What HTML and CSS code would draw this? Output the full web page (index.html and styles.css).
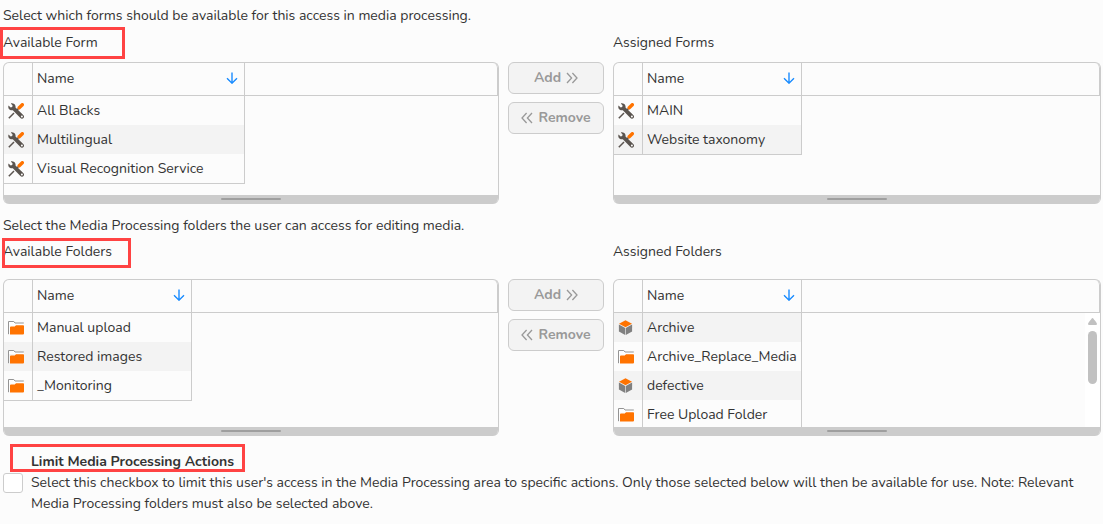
FILE: index.html
```html
<!DOCTYPE html>
<html lang="en">
<head>
    <meta charset="UTF-8">
    <title>Media Processing Access</title>
    <link rel="stylesheet" href="styles.css">
</head>
<body>
    <svg class="sprite" aria-hidden="true">
        <symbol id="icon-tools" viewBox="0 0 16 16">
            <path d="M0.8 15.2 L6 10" stroke="#5b5550" stroke-width="1.5" fill="none"/>
            <path d="M9 7 L10.4 5.6" stroke="#5b5550" stroke-width="1.5" fill="none"/>
            <path d="M11.2 4.8 L14.3 1.7" stroke="#ff7300" stroke-width="3.4" stroke-linecap="round" fill="none"/>
            <path d="M2.8 0.4 L4.6 2.4 L4.2 4 L2.7 4.4 L0.5 2.6 C-0.2 4.8 0.9 6.7 2.8 7.2 C3.6 7.4 4.2 7.4 4.8 7.3 L12.2 14.8 C13.1 15.9 14.7 16 15.5 15 C16.4 14 16.1 12.6 15 11.8 L7.5 4.6 C7.8 3.3 7.3 1.9 6.2 1 C5.2 0.3 3.9 0 2.8 0.4 Z" fill="#5b5550"/>
            <circle cx="13.9" cy="13.6" r="1" fill="#fcfcfc"/>
        </symbol>
        <symbol id="icon-folder" viewBox="0 0 16 16">
            <path d="M0.5 14 V1.5 H6 L7.2 3.3 H16 V5 H1 V14 Z" fill="#fff"/>
            <path d="M0.5 14.2 V1.5 H5.8 L7 3 H15.8" stroke="#949494" stroke-width="1" fill="none"/>
            <path d="M3 6.4 H6.8 L8 5.2 H15.2 Q16 5.2 16 6 V13.4 Q16 14.4 15 14.4 H2 V7.4 Q2 6.4 3 6.4 Z" fill="#ff7300"/>
        </symbol>
        <symbol id="icon-cube" viewBox="0 0 16 16">
            <path d="M7.5 0.2 L14 3.7 L7.5 7.2 L1 3.7 Z" fill="#ff7300"/>
            <path d="M0.9 4.5 L7.2 7.9 V15 L0.9 11.6 Z" fill="#808080"/>
            <path d="M14.1 4.5 L7.8 7.9 V15 L14.1 11.6 Z" fill="#808080"/>
        </symbol>
        <symbol id="icon-sort" viewBox="0 0 12 12">
            <path d="M6 0.5 V11 M1 6.2 L6 11.2 L11 6.2" stroke="#1a8cff" stroke-width="1.4" fill="none"/>
        </symbol>
        <symbol id="icon-right" viewBox="0 0 12 12">
            <path d="M1 1 L5.6 6 L1 11 M6.4 1 L11 6 L6.4 11" stroke="#999" stroke-width="1.3" fill="none"/>
        </symbol>
        <symbol id="icon-left" viewBox="0 0 12 12">
            <path d="M5.6 1 L1 6 L5.6 11 M11 1 L6.4 6 L11 11" stroke="#999" stroke-width="1.3" fill="none"/>
        </symbol>
    </svg>

    <main class="access-settings">
        <section class="picker">
            <p class="intro">Select which forms should be available for this access in media processing.</p>
            <div class="picker-labels">
                <h3 class="label"><span class="marked marked-form">Available Form</span></h3>
                <h3 class="label label-assigned">Assigned Forms</h3>
            </div>
            <div class="picker-lists">
                <div class="list">
                    <div class="list-view">
                        <table>
                            <thead>
                                <tr><th class="col-icon"></th><th class="col-name col-wide"><span class="sort">Name <svg><use href="#icon-sort"/></svg></span></th><th class="col-rest"></th></tr>
                            </thead>
                            <tbody>
                                <tr><td><svg><use href="#icon-tools"/></svg></td><td>All Blacks</td></tr>
                                <tr><td><svg><use href="#icon-tools"/></svg></td><td>Multilingual</td></tr>
                                <tr><td><svg><use href="#icon-tools"/></svg></td><td>Visual Recognition Service</td></tr>
                            </tbody>
                        </table>
                    </div>
                    <div class="resizer"></div>
                </div>
                <div class="actions">
                    <button type="button" disabled>Add <svg><use href="#icon-right"/></svg></button>
                    <button type="button" disabled><svg><use href="#icon-left"/></svg> Remove</button>
                </div>
                <div class="list">
                    <div class="list-view">
                        <table>
                            <thead>
                                <tr><th class="col-icon"></th><th class="col-name"><span class="sort">Name <svg><use href="#icon-sort"/></svg></span></th><th class="col-rest"></th></tr>
                            </thead>
                            <tbody>
                                <tr><td><svg><use href="#icon-tools"/></svg></td><td>MAIN</td></tr>
                                <tr><td><svg><use href="#icon-tools"/></svg></td><td>Website taxonomy</td></tr>
                            </tbody>
                        </table>
                    </div>
                    <div class="resizer"></div>
                </div>
            </div>
        </section>

        <section class="picker picker-folders">
            <p class="intro">Select the Media Processing folders the user can access for editing media.</p>
            <div class="picker-labels">
                <h3 class="label"><span class="marked marked-folders">Available Folders</span></h3>
                <h3 class="label label-assigned">Assigned Folders</h3>
            </div>
            <div class="picker-lists">
                <div class="list">
                    <div class="list-view">
                        <table>
                            <thead>
                                <tr><th class="col-icon"></th><th class="col-name"><span class="sort">Name <svg><use href="#icon-sort"/></svg></span></th><th class="col-rest"></th></tr>
                            </thead>
                            <tbody>
                                <tr><td><svg><use href="#icon-folder"/></svg></td><td>Manual upload</td></tr>
                                <tr><td><svg><use href="#icon-folder"/></svg></td><td>Restored images</td></tr>
                                <tr><td><svg><use href="#icon-folder"/></svg></td><td>_Monitoring</td></tr>
                            </tbody>
                        </table>
                    </div>
                    <div class="resizer"></div>
                </div>
                <div class="actions">
                    <button type="button" disabled>Add <svg><use href="#icon-right"/></svg></button>
                    <button type="button" disabled><svg><use href="#icon-left"/></svg> Remove</button>
                </div>
                <div class="list">
                    <div class="list-view">
                        <table class="stripe-odd">
                            <thead>
                                <tr><th class="col-icon"></th><th class="col-name"><span class="sort">Name <svg><use href="#icon-sort"/></svg></span></th><th class="col-rest"></th></tr>
                            </thead>
                            <tbody>
                                <tr><td><svg><use href="#icon-cube"/></svg></td><td>Archive</td></tr>
                                <tr><td><svg><use href="#icon-folder"/></svg></td><td>Archive_Replace_Media</td></tr>
                                <tr><td><svg><use href="#icon-cube"/></svg></td><td>defective</td></tr>
                                <tr><td><svg><use href="#icon-folder"/></svg></td><td>Free Upload Folder</td></tr>
                            </tbody>
                        </table>
                        <div class="scrollbar">
                            <svg viewBox="0 0 9 7"><path d="M4.5 0 Q5.2 0 9 5.5 Q9 7 8 7 H1 Q0 7 0 5.5 Q3.8 0 4.5 0 Z" fill="#c1c1c1"/></svg>
                            <div class="scrollbar-thumb"></div>
                        </div>
                    </div>
                    <div class="resizer"></div>
                </div>
            </div>
        </section>

        <section class="limit">
            <input type="checkbox" id="limit-actions">
            <label for="limit-actions">
                <strong class="marked marked-limit">Limit Media Processing Actions</strong>
                <span class="limit-text">Select this checkbox to limit this user's access in the Media Processing area to specific actions. Only those selected below will then be available for use. Note: Relevant Media Processing folders must also be selected above.</span>
            </label>
        </section>
    </main>
</body>
</html>
```
FILE: styles.css
```css
* {
    margin: 0;
    padding: 0;
    box-sizing: border-box;
}

body {
    font-family: Nunito, Lato, sans-serif;
    font-size: 14px;
    line-height: 21px;
    color: #333;
    background-color: #fcfcfc;
}

.sprite {
    display: none;
}

.access-settings {
    padding: 5px 2px 5px 3px;
}

.picker-labels,
.picker-lists {
    display: grid;
    grid-template-columns: 496fr 96px 488fr;
    column-gap: 9px;
}

.picker-labels {
    margin: 6px 0 9px;
}

.picker-folders {
    margin-top: 11px;
}

.picker-folders .picker-labels {
    margin: 5px 0 17px;
}

.label {
    font-size: 14px;
    font-weight: 400;
}

.label-assigned {
    grid-column: 3;
}

/* red frames round the labels */
.marked {
    position: relative;
}

.marked::after {
    content: "";
    position: absolute;
    border: 3px solid #ff4343;
}

.marked-form::after {
    inset: -6px -27px -7px -3px;
}

.marked-folders::after {
    inset: -4px -19px -7px -1px;
}

.marked-limit::after {
    inset: -7px -11px 0 -21px;
}

.list {
    border: 1px solid #ccc;
    border-bottom: 0;
    border-radius: 6px;
    overflow: hidden;
}

.list-view {
    position: relative;
    height: 132px;
    overflow: hidden;
}

.picker-folders .list-view {
    height: 147px;
}

table {
    width: 100%;
    table-layout: fixed;
    border-collapse: separate;
    border-spacing: 0;
}

th {
    height: 33px;
    font-weight: 400;
    text-align: left;
    border-right: 1px solid #ccc;
    border-bottom: 1px solid #ccc;
}

.col-icon {
    width: 29px;
}

.col-name {
    width: 159px;
    padding: 0 4px 2px;
}

.col-wide {
    width: 212px;
}

.col-rest {
    border-top-right-radius: 5px;
}

td {
    height: 29px;
    padding: 0 4px;
    border-right: 1px solid #ccc;
    white-space: nowrap;
}

tbody tr:nth-child(even) td,
.stripe-odd tbody tr:nth-child(odd) td {
    background-color: #f3f3f3;
}

.stripe-odd tbody tr:nth-child(even) td {
    background-color: transparent;
}

tbody tr:last-child td {
    height: 30px;
    border-bottom: 1px solid #ccc;
}

td svg {
    display: block;
    width: 16px;
    height: 16px;
}

.sort {
    display: flex;
    justify-content: space-between;
    align-items: center;
    padding-right: 2px;
}

.sort svg {
    width: 12px;
    height: 12px;
}

.resizer {
    height: 9px;
    padding-top: 3px;
    background-color: #ccc;
}

.resizer::before {
    content: "";
    display: block;
    width: 60px;
    height: 2px;
    margin: 0 auto;
    border-radius: 1px;
    background-color: #9f9f9f;
}

.scrollbar {
    position: absolute;
    top: 33px;
    right: 0;
    bottom: 0;
    width: 15px;
    padding: 5px 3px;
    background-color: #fff;
}

.scrollbar svg {
    display: block;
    width: 9px;
    height: 7px;
}

.scrollbar-thumb {
    height: 53px;
    margin-top: 6px;
    border-radius: 5px;
    background-color: #c1c1c1;
}

.actions {
    display: flex;
    flex-direction: column;
    gap: 8px;
}

button {
    display: flex;
    justify-content: center;
    align-items: center;
    gap: 5px;
    height: 32px;
    padding-bottom: 1px;
    font-family: inherit;
    font-size: 14px;
    font-weight: 700;
    color: #999;
    background-color: #f3f3f3;
    border: 1px solid #ccc;
    border-radius: 6px;
}

button svg {
    width: 12px;
    height: 12px;
}

.limit {
    display: flex;
    align-items: flex-start;
    gap: 8px;
    margin-top: 15px;
}

.limit input {
    appearance: none;
    flex-shrink: 0;
    width: 20px;
    height: 20px;
    margin-top: 22px;
    background-color: #fff;
    border: 1px solid #ccc;
    border-radius: 3px;
}

.limit strong,
.limit-text {
    display: block;
}

.limit strong {
    width: fit-content;
}
```
